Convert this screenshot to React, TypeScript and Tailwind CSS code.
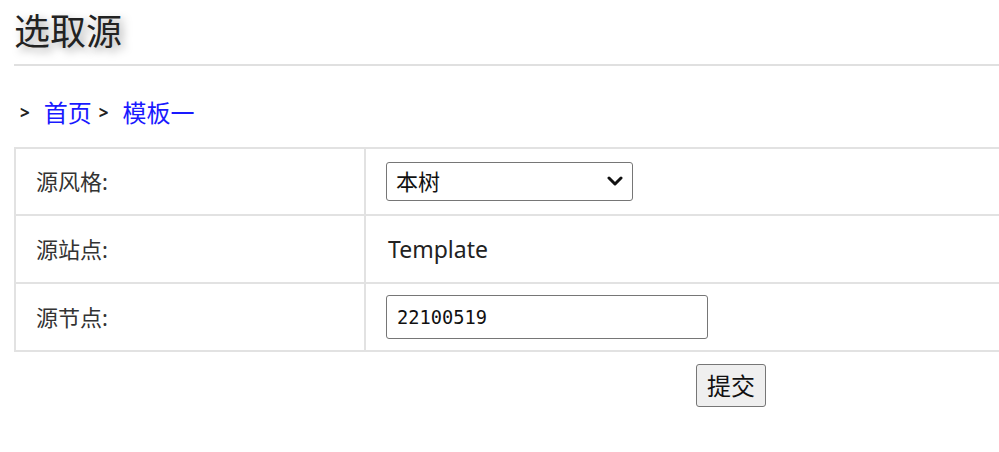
import React from "react";

const cjk = { fontFamily: '"Noto Sans", "Noto Sans CJK SC", sans-serif' };

export default function App() {
  return (
    <div className="w-full h-[452px] overflow-hidden bg-white text-[#222]" style={cjk}>
      <div className="w-[1100px] pl-[14px]">
        <h1 className="text-[36px] leading-[44px] pt-[10px] pb-[10px] font-normal text-[#222] [text-shadow:4px_4px_8px_rgba(0,0,0,0.35)]">
          选取源
        </h1>
        <div className="h-[2px] bg-[#e0e0e0]" />
        <div className="mt-[33px] flex items-center pl-[6px] text-[24px] leading-[28px]">
          <span className="text-[17px] font-bold text-[#222] mr-[14px]">&gt;</span>
          <a className="text-[#1a1aff] mr-[7px]">首页</a>
          <span className="text-[17px] font-bold text-[#222] mr-[14px]">&gt;</span>
          <a className="text-[#1a1aff]">模板一</a>
        </div>
        <table className="mt-[20px] border-collapse w-[1086px] text-[22px] text-[#333]">
          <tbody>
            <tr className="h-[67px]">
              <td className="w-[350px] border-2 border-[#e2e2e2] pl-[20px]">源风格:</td>
              <td className="border-2 border-[#e2e2e2] pl-[20px]">
                <div className="relative w-[247px] h-[39px]">
                  <select className="appearance-none w-full h-full border border-[#767676] rounded-[3px] pl-[9px] text-[22px] text-[#111] bg-white outline-none">
                    <option>本树</option>
                  </select>
                  <svg className="absolute right-[10px] top-[12px] pointer-events-none" width="16" height="14" viewBox="0 0 16 14">
                    <path d="M2 4 L8 10 L14 4" fill="none" stroke="#111" strokeWidth="3" strokeLinecap="round" strokeLinejoin="round" />
                  </svg>
                </div>
              </td>
            </tr>
            <tr className="h-[68px]">
              <td className="border-2 border-[#e2e2e2] pl-[20px]">源站点:</td>
              <td className="border-2 border-[#e2e2e2] pl-[22px] text-[23px] text-[#222]">Template</td>
            </tr>
            <tr className="h-[68px]">
              <td className="border-2 border-[#e2e2e2] pl-[20px]">源节点:</td>
              <td className="border-2 border-[#e2e2e2] pl-[20px]">
                <input
                  defaultValue="22100519"
                  className="w-[322px] h-[44px] border border-[#767676] rounded-[3px] pl-[10px] text-[18.7px] text-[#111] outline-none"
                  style={{ fontFamily: '"DejaVu Sans Mono", monospace' }}
                />
              </td>
            </tr>
          </tbody>
        </table>
        <div className="pl-[682px] mt-[12px]">
          <button className="w-[70px] h-[43px] bg-[#efefef] border border-[#767676] rounded-[3px] text-[24px] text-[#111] leading-none">
            提交
          </button>
        </div>
      </div>
    </div>
  );
}
